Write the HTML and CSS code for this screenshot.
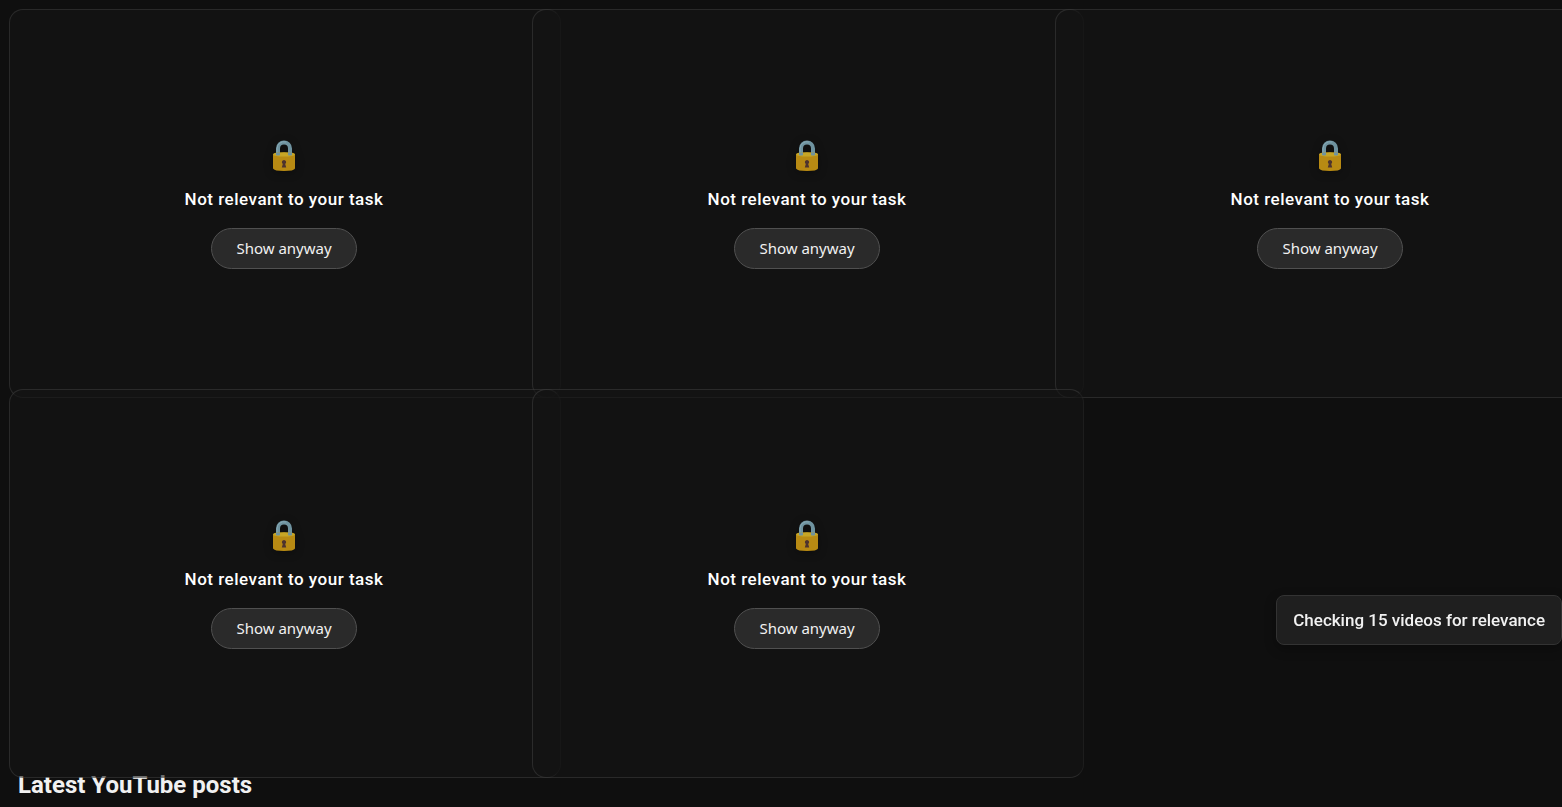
FILE: index.html
```html
<!DOCTYPE html>
<html lang="en">
  <head>
    <meta charset="UTF-8" />
    <meta name="viewport" content="width=device-width, initial-scale=1.0" />
    <title>YouTube</title>
    <link rel="stylesheet" href="styles.css">
  </head>
  <body>
    <!-- Shared padlock icon -->
    <svg class="sprite" aria-hidden="true">
      <symbol id="lock" viewBox="0 0 24 32">
        <path d="M6 15V8.500a6 6 0 0 1 12 0V15" fill="none" stroke="#6f93a0" stroke-width="4" />
        <path d="M5 14V8.500a7 7 0 0 1 9-6.500" fill="none" stroke="#86a9b5" stroke-width="1" />
        <path d="M1 14.500Q1 12.500 12 12.500T23 14.500V28.500Q22 31 12 31T1 28.500Z" fill="#b88a13" />
        <path d="M1 14.500Q1 12.300 12 12.300T23 14.500Q22 16.500 12 16.500T1 14.500Z" fill="#c6a526" />
        <path d="M4 12.500h4v2.500q-2 1-4 0zM16 12.500h4v2.500q-2 1-4 0z" fill="#6f93a0" />
        <path d="M12 20a2.200 2.200 0 0 1 1.200 4l1 3.500H9.800l1-3.500A2.200 2.200 0 0 1 12 20Z" fill="#4e342e" />
      </symbol>
    </svg>

    <main class="feed">
      <section class="grid">
        <article class="card">
          <svg class="lock"><use href="#lock" /></svg>
          <p class="message">Not relevant to your task</p>
          <button class="show-button" type="button">Show anyway</button>
        </article>
        <article class="card">
          <svg class="lock"><use href="#lock" /></svg>
          <p class="message">Not relevant to your task</p>
          <button class="show-button" type="button">Show anyway</button>
        </article>
        <article class="card">
          <svg class="lock"><use href="#lock" /></svg>
          <p class="message">Not relevant to your task</p>
          <button class="show-button" type="button">Show anyway</button>
        </article>
        <article class="card">
          <svg class="lock"><use href="#lock" /></svg>
          <p class="message">Not relevant to your task</p>
          <button class="show-button" type="button">Show anyway</button>
        </article>
        <article class="card">
          <svg class="lock"><use href="#lock" /></svg>
          <p class="message">Not relevant to your task</p>
          <button class="show-button" type="button">Show anyway</button>
        </article>
      </section>
      <h2 class="section-title">Latest YouTube posts</h2>
    </main>

    <div class="toast" role="status">Checking 15 videos for relevance</div>
  </body>
</html>
```
FILE: styles.css
```css
* {
  box-sizing: border-box;
}

body {
  margin: 0;
  background-color: #0f0f0f;
  color: #f1f1f1;
  font-family: Roboto, Arial, sans-serif;
  overflow: hidden;
}

.sprite {
  display: none;
}

.feed {
  padding: 9px 0 0 9px;
}

/* The last column runs past the right edge of the window */
.grid {
  position: relative;
  z-index: 1;
  display: grid;
  grid-template-columns: repeat(3, 1fr);
  margin-right: -16px;
}

/* Each overlay is larger than its cell, so neighbours overlap */
.card {
  display: flex;
  flex-direction: column;
  align-items: center;
  justify-content: center;
  min-height: 389px;
  margin: 0 -29px -9px 0;
  padding: 2px 2px 0 0;
  background-color: rgba(20, 20, 20, 0.6);
  border: 1px solid rgba(255, 255, 255, 0.1);
  border-right-color: rgba(255, 255, 255, 0.05);
  border-radius: 14px;
}

.lock {
  width: 24px;
  height: 32px;
  margin-bottom: 17px;
  filter: drop-shadow(0 2px 4px rgba(0, 0, 0, 0.3));
}

.message {
  margin: 0 0 19px;
  color: #fff;
  font-size: 17px;
  font-weight: 500;
  line-height: 20px;
  letter-spacing: 0.03em;
}

.show-button {
  padding: 8px 24px;
  background-color: #2a2a2a;
  border: 1px solid #505050;
  border-radius: 21px;
  color: #f1f1f1;
  font-family: "Noto Sans", sans-serif;
  font-size: 15px;
  line-height: 23px;
  cursor: pointer;
}

.show-button:hover {
  background-color: #3a3a3a;
}

.section-title {
  margin: 0 9px;
  font-size: 24px;
  font-weight: 700;
  line-height: 32px;
}

.toast {
  position: fixed;
  right: 0;
  bottom: 162px;
  z-index: 2;
  padding: 14px 16px;
  background-color: #1f1f1f;
  border: 1px solid #333;
  border-radius: 8px;
  box-shadow: 0 4px 12px rgba(0, 0, 0, 0.3);
  font-size: 17px;
  font-weight: 500;
  line-height: 20px;
}
```
